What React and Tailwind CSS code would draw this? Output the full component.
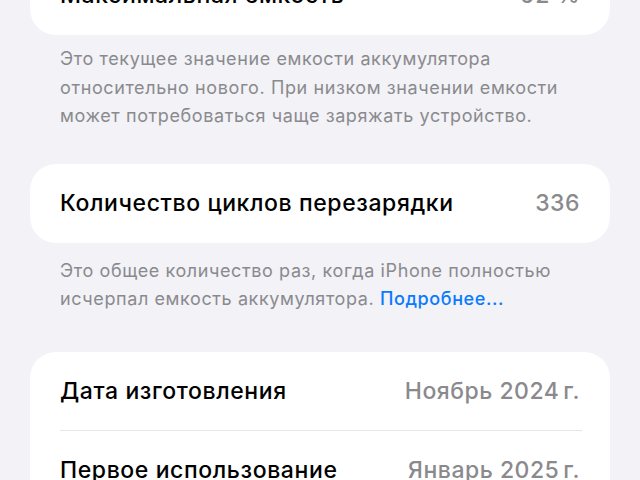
import React from 'react';

const font = { fontFamily: 'Inter, "Noto Sans", sans-serif' };

const Row = ({ label, value, divider }) => (
    <div className="relative flex items-center justify-between h-[79px] px-[30px]">
        <span className="text-[23px] font-medium text-black tracking-[0.6px]">{label}</span>
        <span className="text-[23px] font-medium text-[#8a8a8e] tracking-[0.5px]">{value}</span>
        {divider && <div className="absolute bottom-0 left-[30px] right-[28px] h-px bg-[#e5e5ea]" />}
    </div>
);

const Card = ({ children, className = '' }) => (
    <div className={`mx-[30px] bg-white rounded-[26px] overflow-hidden ${className}`}>{children}</div>
);

const Note = ({ children, className = '' }) => (
    <p className={`px-[60px] text-[18px] leading-[28.5px] tracking-[0.6px] text-[#8a8a8e] ${className}`}>{children}</p>
);

export default function App() {
    return (
        <div className="w-[640px] h-[480px] overflow-hidden bg-[#f2f2f7]" style={font}>
            <div className="-mt-[44px]">
                <Card>
                    <Row label="Максимальная емкость" value="92 %" />
                </Card>
                <Note className="mt-[10px]">
                    Это текущее значение емкости аккумулятора относительно нового. При низком значении емкости может потребоваться чаще заряжать устройство.
                </Note>
                <Card className="mt-[33px]">
                    <Row label="Количество циклов перезарядки" value="336" />
                </Card>
                <Note className="mt-[14px]">
                    Это общее количество раз, когда iPhone полностью исчерпал емкость аккумулятора.{' '}
                    <span className="text-[#0a7aff] font-medium">Подробнее...</span>
                </Note>
                <Card className="mt-[38px]">
                    <Row label="Дата изготовления" value={'Ноябрь 2024\u202Fг.'} divider />
                    <Row label="Первое использование" value={'Январь 2025\u202Fг.'} />
                </Card>
            </div>
        </div>
    );
}
